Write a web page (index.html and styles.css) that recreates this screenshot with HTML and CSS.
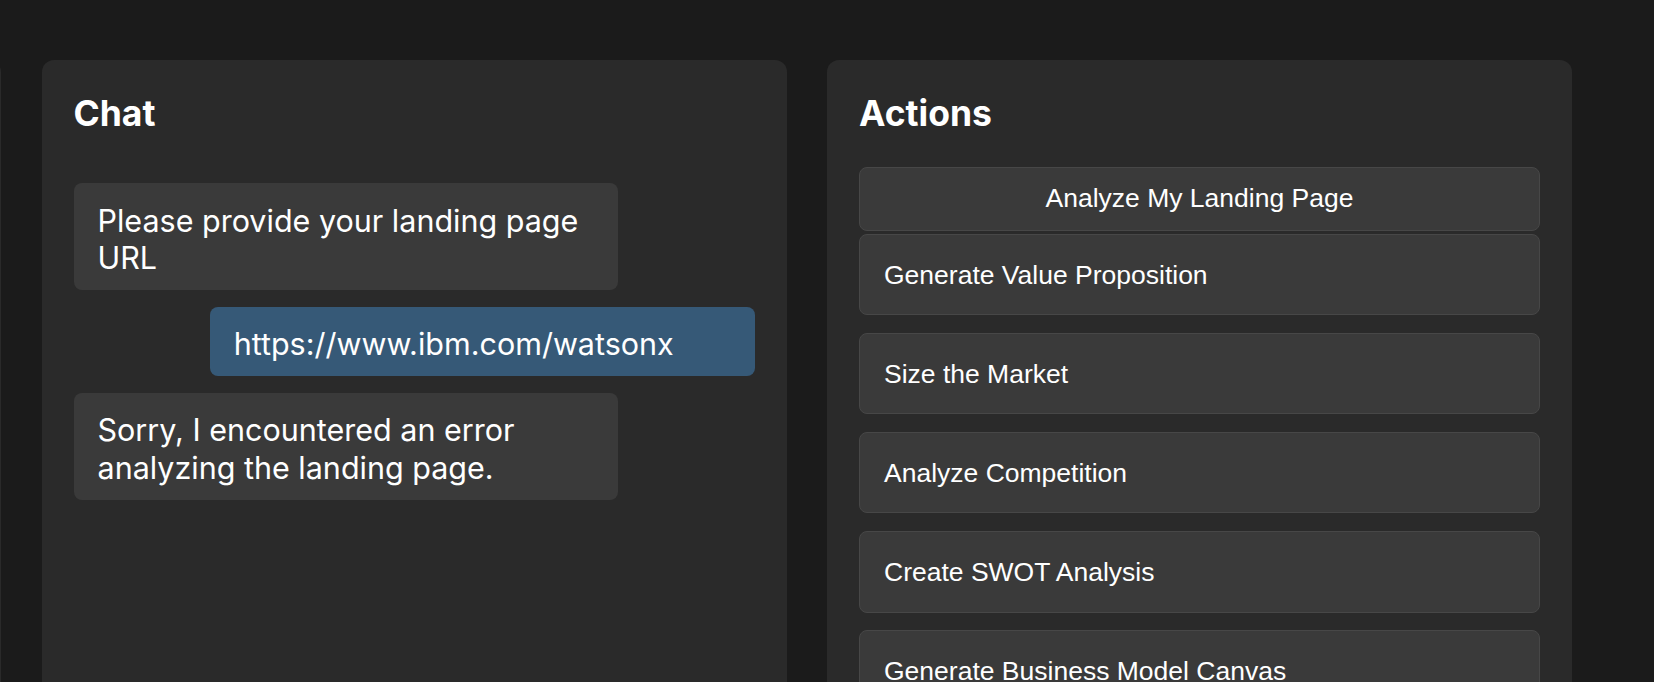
FILE: index.html
```html
<!DOCTYPE html>
<html lang="en">
<head>
<meta charset="utf-8">
<title>Landing Page Assistant</title>
<link rel="stylesheet" href="styles.css">
</head>
<body>
<main class="workspace">
  <section class="panel panel-offscreen" aria-hidden="true"></section>

  <section class="panel">
    <h2 class="panel-title">Chat</h2>
    <div class="messages">
      <div class="bubble bubble-bot">Please provide your landing page URL</div>
      <div class="bubble bubble-user">https://www.ibm.com/watsonx</div>
      <div class="bubble bubble-bot">Sorry, I encountered an error analyzing the landing page.</div>
    </div>
  </section>

  <section class="panel">
    <h2 class="panel-title">Actions</h2>
    <div class="actions">
      <button class="action action-primary">Analyze My Landing Page</button>
      <button class="action">Generate Value Proposition</button>
      <button class="action">Size the Market</button>
      <button class="action">Analyze Competition</button>
      <button class="action">Create SWOT Analysis</button>
      <button class="action">Generate Business Model Canvas</button>
    </div>
  </section>
</main>
</body>
</html>
```

FILE: styles.css
```css
html, body {
  margin: 0;
  padding: 0;
  height: 100%;
  overflow: hidden;
  background: #1b1b1b;
}

body {
  font-family: Inter, "Noto Sans", "Liberation Sans", sans-serif;
  color: #ffffff;
}

.workspace {
  display: flex;
  align-items: flex-start;
  gap: 40.5px;
  padding-top: 60px;
  margin-left: -744px;
}

.panel {
  flex: none;
  width: 745px;
  min-height: 760px;
  box-sizing: border-box;
  padding: 32px;
  background: #2a2a2a;
  border-radius: 12px;
}

.panel-title {
  margin: 0 0 32px;
  font-size: 35.5px;
  line-height: 43px;
  font-weight: 700;
  color: #ffffff;
}

.messages {
  display: flex;
  flex-direction: column;
  gap: 16.5px;
  padding-top: 16px;
}

.bubble {
  width: 80%;
  box-sizing: border-box;
  padding: 18.5px 24px 13.5px;
  border-radius: 8px;
  font-size: 30.5px;
  line-height: 37.5px;
  color: #ffffff;
}

.bubble-bot {
  align-self: flex-start;
  background: #3a3a3a;
}

.bubble-user {
  align-self: flex-end;
  background: #365977;
}

.actions {
  display: flex;
  flex-direction: column;
}

.action {
  display: block;
  width: 100%;
  box-sizing: border-box;
  margin: 0 0 17.5px;
  padding: 25px 24px 23px 24px;
  background: #3a3a3a;
  border: 1px solid #474747;
  border-radius: 8px;
  font-family: "Liberation Sans", Arial, sans-serif;
  font-size: 26.5px;
  line-height: 31.6px;
  color: #ffffff;
  text-align: left;
}

.action-primary {
  margin-bottom: 2.3px;
  padding-top: 15.4px;
  padding-bottom: 15.4px;
  text-align: center;
}
```
